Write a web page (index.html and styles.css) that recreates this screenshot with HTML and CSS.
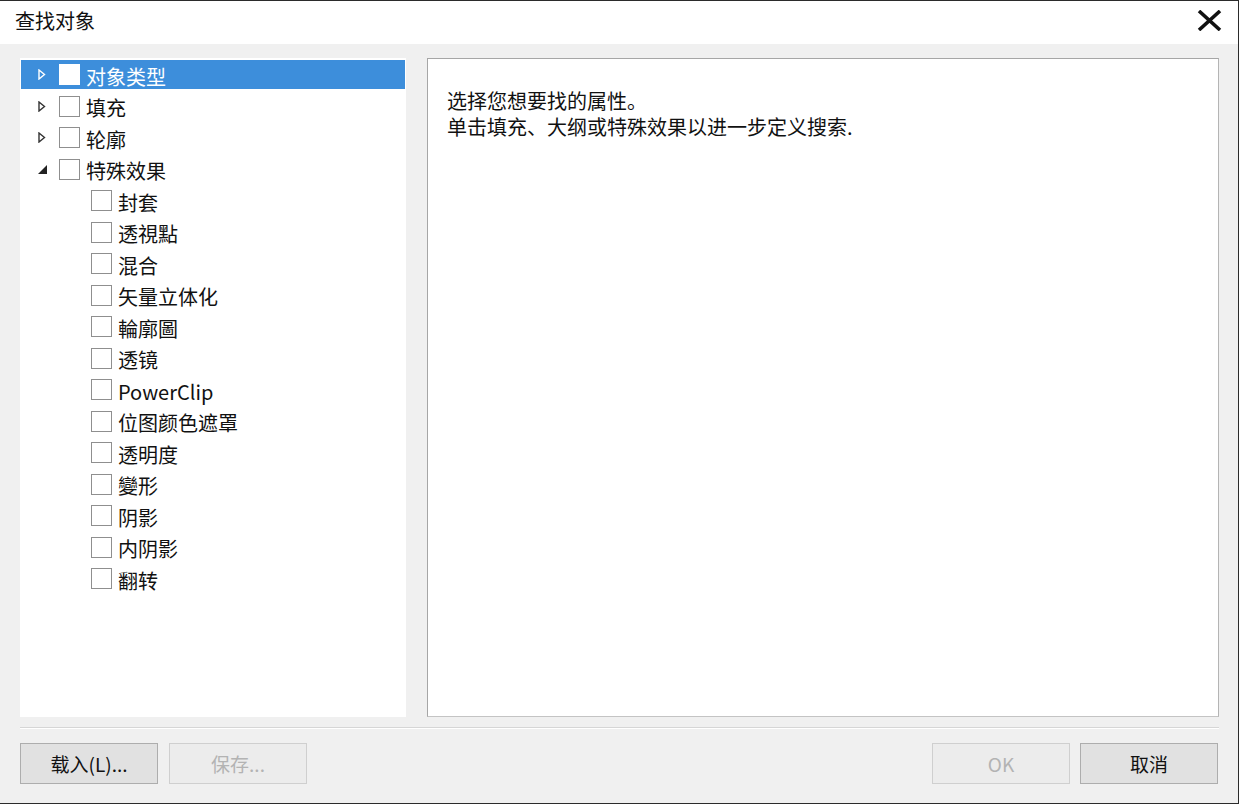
FILE: index.html
```html
<!DOCTYPE html>
<html lang="zh-CN">
<head>
<meta charset="utf-8">
<title>查找对象</title>
<link rel="stylesheet" href="styles.css">
</head>
<body>
<div class="window">
  <div class="titlebar">
    <span class="title">查找对象</span>
    <button class="close" aria-label="关闭">
      <svg width="25" height="21" viewBox="0 0 25 21"><path d="M2 1 L23 20 M23 1 L2 20" stroke="#111" stroke-width="3.6" fill="none"/></svg>
    </button>
  </div>
  <div class="main">
    <div class="panes">
      <div class="tree">
        <div class="row selected">
          <span class="arrow"><svg width="8" height="11" viewBox="0 0 8 11"><polygon points="1,1 6.5,5.5 1,10" fill="none" stroke="#fff" stroke-width="1.4"/></svg></span>
          <span class="cb"></span><span class="label">对象类型</span>
        </div>
        <div class="row">
          <span class="arrow"><svg width="8" height="11" viewBox="0 0 8 11"><polygon points="1,1 6.5,5.5 1,10" fill="none" stroke="#333" stroke-width="1.4"/></svg></span>
          <span class="cb"></span><span class="label">填充</span>
        </div>
        <div class="row">
          <span class="arrow"><svg width="8" height="11" viewBox="0 0 8 11"><polygon points="1,1 6.5,5.5 1,10" fill="none" stroke="#333" stroke-width="1.4"/></svg></span>
          <span class="cb"></span><span class="label">轮廓</span>
        </div>
        <div class="row">
          <span class="arrow"><svg width="9" height="9" viewBox="0 0 9 9"><polygon points="9,0 9,9 0,9" fill="#222"/></svg></span>
          <span class="cb"></span><span class="label">特殊效果</span>
        </div>
        <div class="row child"><span class="cb"></span><span class="label">封套</span></div>
        <div class="row child"><span class="cb"></span><span class="label">透視點</span></div>
        <div class="row child"><span class="cb"></span><span class="label">混合</span></div>
        <div class="row child"><span class="cb"></span><span class="label">矢量立体化</span></div>
        <div class="row child"><span class="cb"></span><span class="label">輪廓圖</span></div>
        <div class="row child"><span class="cb"></span><span class="label">透镜</span></div>
        <div class="row child"><span class="cb"></span><span class="label">PowerClip</span></div>
        <div class="row child"><span class="cb"></span><span class="label">位图颜色遮罩</span></div>
        <div class="row child"><span class="cb"></span><span class="label">透明度</span></div>
        <div class="row child"><span class="cb"></span><span class="label">變形</span></div>
        <div class="row child"><span class="cb"></span><span class="label">阴影</span></div>
        <div class="row child"><span class="cb"></span><span class="label">内阴影</span></div>
        <div class="row child"><span class="cb"></span><span class="label">翻转</span></div>
      </div>
      <div class="info">
        <p>选择您想要找的属性。</p>
        <p>单击填充、大纲或特殊效果以进一步定义搜索.</p>
      </div>
    </div>
    <div class="separator"></div>
    <div class="buttons">
      <div class="group">
        <button class="btn">载入(L)...</button>
        <button class="btn disabled">保存...</button>
      </div>
      <div class="group right">
        <button class="btn disabled">OK</button>
        <button class="btn">取消</button>
      </div>
    </div>
  </div>
</div>
</body>
</html>
```

FILE: styles.css
```css
* { box-sizing: border-box; }
html, body {
  margin: 0;
  padding: 0;
  background: #ffffff;
}
body {
  font-family: "Noto Sans CJK SC", "Noto Sans", sans-serif;
  font-size: 20px;
  color: #111;
}
.window {
  width: 1239px;
  height: 804px;
  border-top: 1px solid #2b2b2b;
  border-right: 1px solid #2b2b2b;
  border-bottom: 1px solid #2b2b2b;
  display: flex;
  flex-direction: column;
  background: #f0f0f0;
}
.titlebar {
  height: 43px;
  background: #ffffff;
  display: flex;
  align-items: center;
  justify-content: space-between;
  padding: 0 15px 4px 15px;
}
.title {
  font-size: 20px;
  line-height: 24px;
  color: #111;
}
.close {
  border: none;
  background: none;
  padding: 0;
  margin: 0 1px 0 0;
  width: 25px;
  height: 21px;
  display: flex;
}
.main {
  flex: 1;
  padding: 14px 19px 0 20px;
  display: flex;
  flex-direction: column;
}
.panes {
  display: flex;
  gap: 21px;
  height: 659px;
}
.tree {
  width: 386px;
  background: #ffffff;
  padding: 2px 1px 0 1px;
  display: flex;
  flex-direction: column;
  gap: 2.5px;
}
.row {
  height: 29px;
  display: flex;
  align-items: center;
  padding-left: 17px;
  flex-shrink: 0;
}
.row.child {
  padding-left: 70px;
}
.row.selected {
  background: #3d8edb;
  color: #ffffff;
}
.arrow {
  width: 21px;
  height: 29px;
  display: flex;
  align-items: center;
}
.cb {
  width: 21px;
  height: 21px;
  border: 1px solid #8f8f8f;
  background: #ffffff;
  flex-shrink: 0;
}
.row.selected .cb {
  border-color: #ffffff;
}
.label {
  margin-left: 6px;
  line-height: 29px;
  padding-top: 3px;
  white-space: nowrap;
}
.info {
  flex: 1;
  background: #ffffff;
  border: 1px solid #a6a6a6;
  border-right-color: #b4b4b4;
  border-bottom-color: #c4c4c4;
  padding: 29px 19px 0 19px;
}
.info p {
  margin: 0;
  line-height: 25.5px;
  font-size: 20px;
}
.separator {
  margin-top: 10px;
  border-top: 1px solid #d6d6d6;
  border-bottom: 1px solid #ffffff;
}
.buttons {
  margin-top: 14px;
  display: flex;
  justify-content: space-between;
}
.group {
  display: flex;
  gap: 11px;
}
.group.right {
  gap: 10px;
  margin-right: 1px;
}
.btn {
  width: 138px;
  height: 41px;
  border: 1px solid #adadad;
  background: #e1e1e1;
  font-family: "Noto Sans CJK SC", "Noto Sans", sans-serif;
  font-size: 19px;
  color: #111;
  padding: 0;
}
.btn.disabled {
  border-color: #cfcfcf;
  background: #ececec;
  color: #b3b3b3;
}
```
